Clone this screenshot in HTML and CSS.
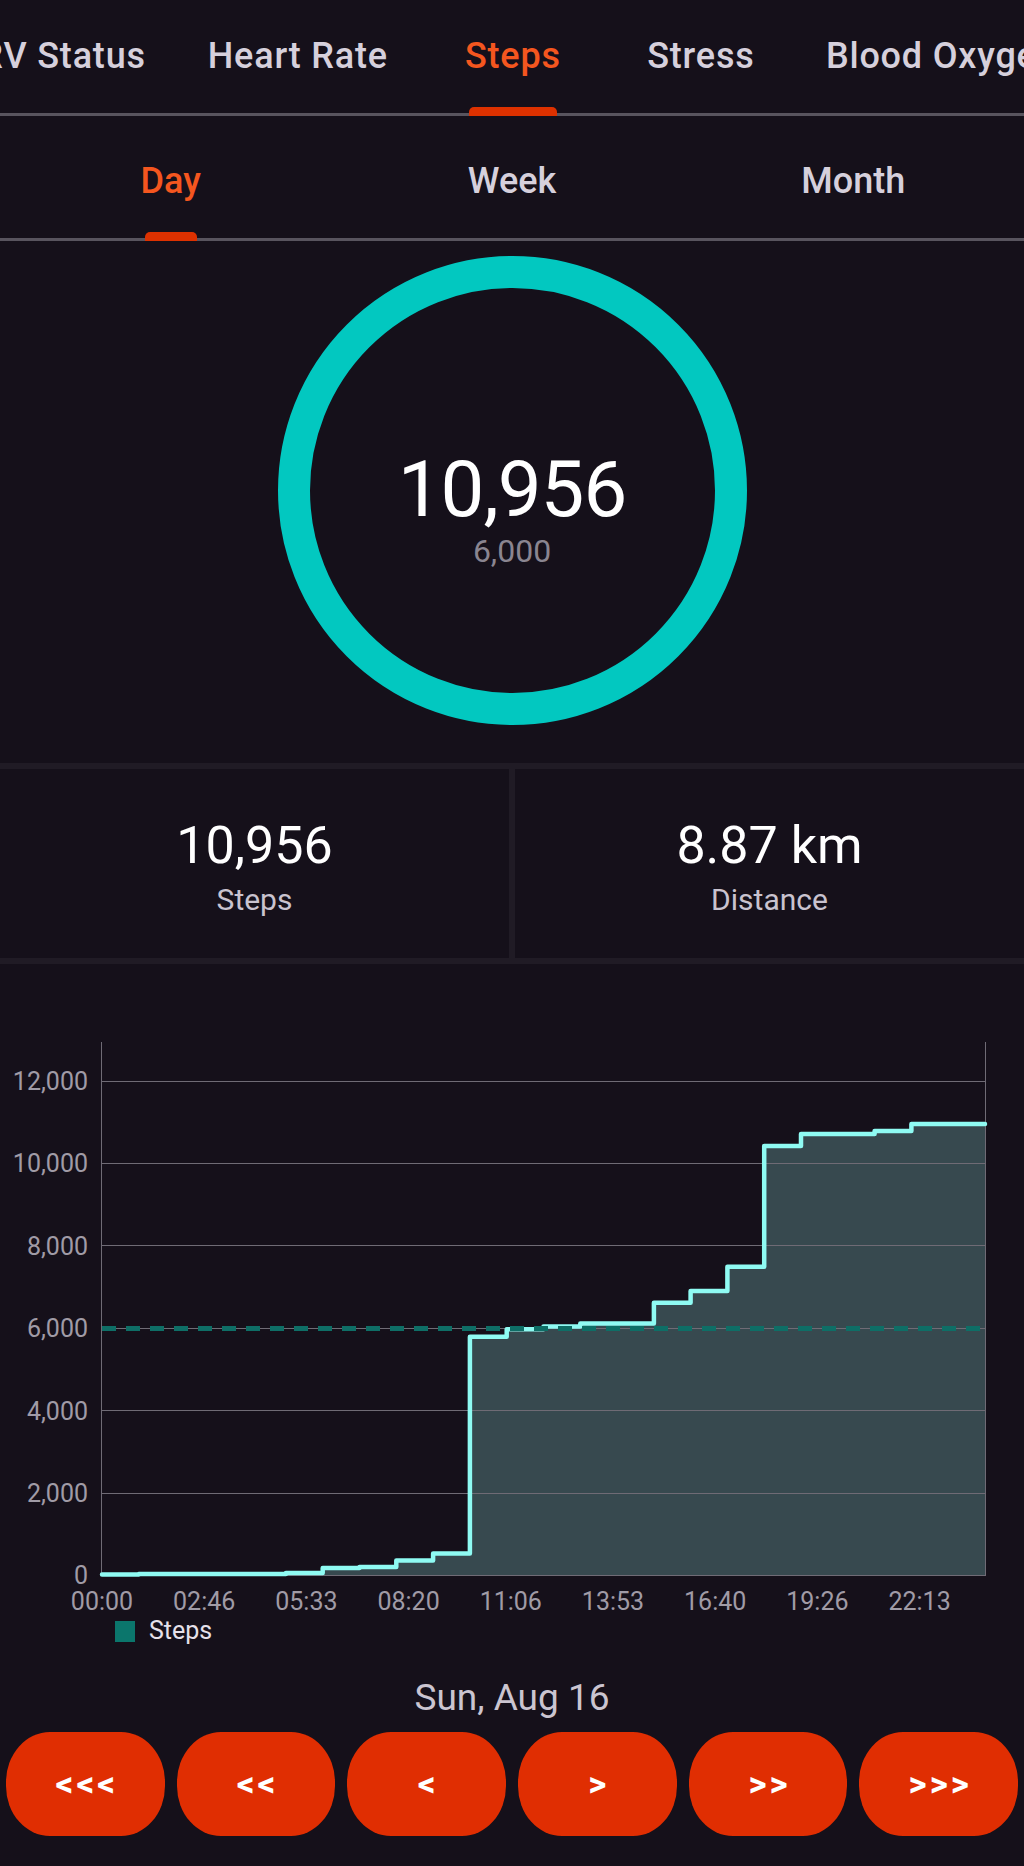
FILE: index.html
```html
<!DOCTYPE html>
<html lang="en">
<head>
<meta charset="utf-8">
<title>Steps</title>
<link rel="stylesheet" href="styles.css">
</head>
<body>
<div class="app">
  <nav class="metric-tabs">
    <div class="metric-strip">
      <div class="tab">HRV Status</div>
      <div class="tab">Heart Rate</div>
      <div class="tab active">Steps</div>
      <div class="tab">Stress</div>
      <div class="tab">Blood Oxygen</div>
    </div>
  </nav>
  <nav class="period-tabs">
    <div class="ptab active">Day</div>
    <div class="ptab">Week</div>
    <div class="ptab">Month</div>
  </nav>

  <section class="ring-wrap">
    <div class="ring">
      <div class="ring-text">
        <div class="ring-value">10,956</div>
        <div class="ring-goal">6,000</div>
      </div>
    </div>
  </section>

  <section class="stats">
    <div class="stat">
      <div class="stat-value">10,956</div>
      <div class="stat-label">Steps</div>
    </div>
    <div class="stat">
      <div class="stat-value">8.87 km</div>
      <div class="stat-label">Distance</div>
    </div>
  </section>

  <section class="chart">
    <svg class="chart-svg" width="1024" height="652" viewBox="0 964 1024 652" xmlns="http://www.w3.org/2000/svg">
      <path class="area" d="M102,1574.5 H138.8 V1574 H285.9 V1573 H322.7 V1568 H359.5 V1567 H396.3 V1560.5 H433.1 V1553.5 H469.9 V1336.7 H506.7 V1329.3 H543.5 V1326.6 H580.3 V1323.4 H653.9 V1302.7 H690.6 V1291 H727.4 V1266.7 H764.2 V1146 H801 V1134 H874.6 V1131 H911.4 V1124.1 H985 V1575.5 H102 Z"/>
      <g class="grid">
        <line x1="102" y1="1081.5" x2="985" y2="1081.5"/>
        <line x1="102" y1="1163.5" x2="985" y2="1163.5"/>
        <line x1="102" y1="1245.5" x2="985" y2="1245.5"/>
        <line x1="102" y1="1328.5" x2="985" y2="1328.5"/>
        <line x1="102" y1="1410.5" x2="985" y2="1410.5"/>
        <line x1="102" y1="1493.5" x2="985" y2="1493.5"/>
        <line x1="101.5" y1="1042" x2="101.5" y2="1576"/>
        <line x1="985.5" y1="1042" x2="985.5" y2="1576"/>
        <line x1="102" y1="1575.5" x2="985" y2="1575.5"/>
      </g>
      <path class="step-line" d="M102,1574.5 H138.8 V1574 H285.9 V1573 H322.7 V1568 H359.5 V1567 H396.3 V1560.5 H433.1 V1553.5 H469.9 V1336.7 H506.7 V1329.3 H543.5 V1326.6 H580.3 V1323.4 H653.9 V1302.7 H690.6 V1291 H727.4 V1266.7 H764.2 V1146 H801 V1134 H874.6 V1131 H911.4 V1124.1 H985"/>
      <line class="goal" x1="102" y1="1328.5" x2="985" y2="1328.5"/>
      <g class="y-labels">
        <text x="88" y="1090">12,000</text>
        <text x="88" y="1172">10,000</text>
        <text x="88" y="1255">8,000</text>
        <text x="88" y="1337">6,000</text>
        <text x="88" y="1420">4,000</text>
        <text x="88" y="1502">2,000</text>
        <text x="88" y="1584">0</text>
      </g>
      <g class="x-labels">
        <text x="102" y="1610">00:00</text>
        <text x="204.2" y="1610">02:46</text>
        <text x="306.4" y="1610">05:33</text>
        <text x="408.6" y="1610">08:20</text>
        <text x="510.8" y="1610">11:06</text>
        <text x="613" y="1610">13:53</text>
        <text x="715.2" y="1610">16:40</text>
        <text x="817.4" y="1610">19:26</text>
        <text x="919.6" y="1610">22:13</text>
      </g>
    </svg>
    <div class="legend"><span class="legend-swatch"></span><span class="legend-label">Steps</span></div>
  </section>

  <div class="date">Sun, Aug 16</div>

  <div class="nav-buttons">
    <button class="nav-btn">&lt;&lt;&lt;</button>
    <button class="nav-btn">&lt;&lt;</button>
    <button class="nav-btn">&lt;</button>
    <button class="nav-btn">&gt;</button>
    <button class="nav-btn">&gt;&gt;</button>
    <button class="nav-btn">&gt;&gt;&gt;</button>
  </div>
</div>
</body>
</html>
```

FILE: styles.css
```css
html, body {
  margin: 0;
  padding: 0;
}

body {
  background: #15101a;
  font-family: Roboto, "Noto Sans", sans-serif;
  color: #d6d0dc;
  width: 1024px;
  height: 1866px;
  overflow: hidden;
}

.app {
  width: 1024px;
}

/* ---------- metric tabs ---------- */
.metric-tabs {
  height: 113px;
  border-bottom: 3px solid #58545e;
}

.metric-strip {
  display: flex;
  margin-left: -77px;
  white-space: nowrap;
}

.tab {
  flex-shrink: 0;
  position: relative;
  box-sizing: border-box;
  min-width: 188px;
  padding: 0 31px;
  text-align: center;
  font-size: 36px;
  font-weight: 500;
  letter-spacing: 0.8px;
  line-height: 113px;
  color: #d6d0dc;
}

.tab.active {
  color: #f4561f;
}

.tab.active::after {
  content: "";
  position: absolute;
  left: 50%;
  bottom: -3px;
  width: 88px;
  height: 9px;
  transform: translateX(-50%);
  background: #dd3100;
  border-radius: 5px 5px 0 0;
}

/* ---------- period tabs ---------- */
.period-tabs {
  display: grid;
  grid-template-columns: repeat(3, 1fr);
  border-bottom: 3px solid #58545e;
}

.ptab {
  position: relative;
  text-align: center;
  padding-top: 8px;
  line-height: 114px;
  font-size: 36px;
  font-weight: 500;
  color: #d6d0dc;
}

.ptab.active {
  color: #f4561f;
}

.ptab.active::after {
  content: "";
  position: absolute;
  left: 50%;
  bottom: -3px;
  width: 52px;
  height: 9px;
  transform: translateX(-50%);
  background: #dd3100;
  border-radius: 5px 5px 0 0;
}

/* ---------- ring ---------- */
.ring-wrap {
  height: 522px;
  box-sizing: border-box;
  padding-top: 15px;
}

.ring {
  width: 469px;
  height: 469px;
  box-sizing: border-box;
  margin: 0 auto;
  border: 32px solid #02c8c0;
  border-radius: 50%;
  display: flex;
  align-items: center;
  justify-content: center;
}

.ring-text {
  padding-top: 37px;
  text-align: center;
}

.ring-value {
  font-size: 78px;
  line-height: 78px;
  letter-spacing: -1px;
  color: #ffffff;
}

.ring-goal {
  margin-top: 6px;
  font-size: 32px;
  line-height: 32px;
  color: #8a8590;
}

/* ---------- stats ---------- */
.stats {
  display: grid;
  grid-template-columns: 1fr 1fr;
  gap: 6px;
  padding: 6px 0;
  background: #201b25;
}

.stat {
  background: #15101a;
  height: 189px;
  box-sizing: border-box;
  padding-top: 51px;
  text-align: center;
}

.stat-value {
  font-size: 52px;
  line-height: 52px;
  color: #ffffff;
}

.stat-label {
  margin-top: 13px;
  font-size: 30px;
  line-height: 30px;
  color: #c9c3cf;
}

/* ---------- chart ---------- */
.chart-svg {
  display: block;
}

.area {
  fill: #37494f;
}

.grid line {
  stroke: #6f6b75;
  stroke-width: 1;
}

.step-line {
  fill: none;
  stroke: #8ffbf3;
  stroke-width: 4.5;
  stroke-linejoin: round;
  stroke-linecap: round;
}

.goal {
  stroke: #0e6e66;
  stroke-width: 5;
  stroke-dasharray: 14 10;
}

.y-labels text,
.x-labels text {
  font-family: Roboto, "Noto Sans", sans-serif;
  font-size: 25px;
  fill: #a09ba6;
}

.y-labels text {
  text-anchor: end;
}

.x-labels text {
  text-anchor: middle;
}

.legend {
  display: flex;
  align-items: center;
  height: 30px;
  padding-left: 115px;
}

.legend-swatch {
  width: 20px;
  height: 21px;
  background: #0b766c;
  margin-right: 14px;
}

.legend-label {
  font-size: 25px;
  line-height: 30px;
  color: #e6e1ea;
}

/* ---------- date + navigation ---------- */
.date {
  margin-top: 32px;
  text-align: center;
  font-size: 37px;
  line-height: 40px;
  color: #cbc5d0;
}

.nav-buttons {
  display: grid;
  grid-template-columns: repeat(6, 1fr);
  gap: 12px;
  padding: 0 6px;
  margin-top: 14px;
}

.nav-btn {
  height: 104px;
  border: none;
  padding: 0 0 0 3px;
  border-radius: 44px / 50px;
  background: #e02e02;
  color: #ffffff;
  font-family: Roboto, "Noto Sans", sans-serif;
  font-size: 35px;
  font-weight: 700;
  letter-spacing: 3px;
}
```
